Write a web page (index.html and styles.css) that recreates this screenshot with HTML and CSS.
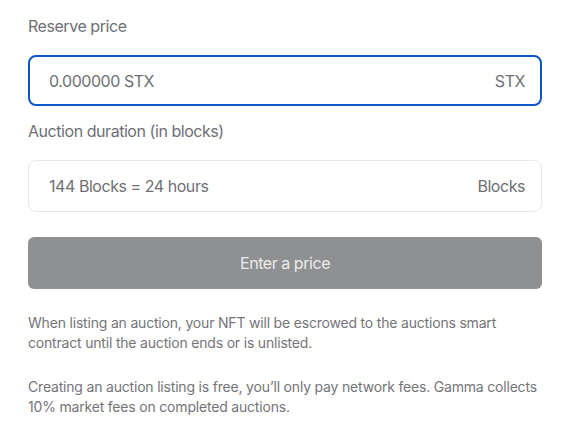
FILE: index.html
```html
<!DOCTYPE html>
<html>
<head>
<meta charset="utf-8">
<link rel="stylesheet" href="styles.css">
</head>
<body>
<div class="form">
  <label class="label">Reserve price</label>
  <div class="field field-focus">
    <span class="value">0.000000 STX</span>
    <span class="unit">STX</span>
  </div>
  <label class="label label-second">Auction duration (in blocks)</label>
  <div class="field">
    <span class="value">144 Blocks = 24 hours</span>
    <span class="unit">Blocks</span>
  </div>
  <button class="submit">Enter a price</button>
  <p class="note">When listing an auction, your NFT will be escrowed to the auctions smart contract until the auction ends or is unlisted.</p>
  <p class="note">Creating an auction listing is free, you’ll only pay network fees. Gamma collects 10% market fees on completed auctions.</p>
</div>
</body>
</html>
```
FILE: styles.css
```css
html, body {
  margin: 0;
  padding: 0;
  background: #ffffff;
}
body {
  font-family: Inter, "Noto Sans", sans-serif;
  color: #6b6b70;
}
.form {
  width: 514px;
  padding: 14px 27px 0 28px;
  display: flex;
  flex-direction: column;
}
.label {
  display: block;
  font-size: 16px;
  line-height: 24px;
  letter-spacing: -0.45px;
  color: #6e6f74;
  margin-bottom: 17px;
}
.label-second {
  margin-top: 13px;
  margin-bottom: 17px;
}
.field {
  box-sizing: border-box;
  height: 52px;
  border: 1px solid #e8e8ea;
  border-radius: 8px;
  display: flex;
  align-items: center;
  justify-content: space-between;
  padding: 0 16px 0 20px;
  font-size: 16px;
  letter-spacing: -0.45px;
  color: #6e6f74;
}
.field-focus {
  height: 51px;
  border: 2px solid #0d57c6;
  padding: 0 15px 0 19px;
}
.submit {
  margin-top: 25px;
  height: 52px;
  border: none;
  border-radius: 6px;
  background: #8f9092;
  color: #ececec;
  font-family: Inter, "Noto Sans", sans-serif;
  font-size: 16px;
  letter-spacing: -0.45px;
  padding: 0;
}
.note {
  margin: 24px 0 0 0;
  font-size: 14px;
  line-height: 20px;
  letter-spacing: -0.19px;
  color: #747479;
}
```
